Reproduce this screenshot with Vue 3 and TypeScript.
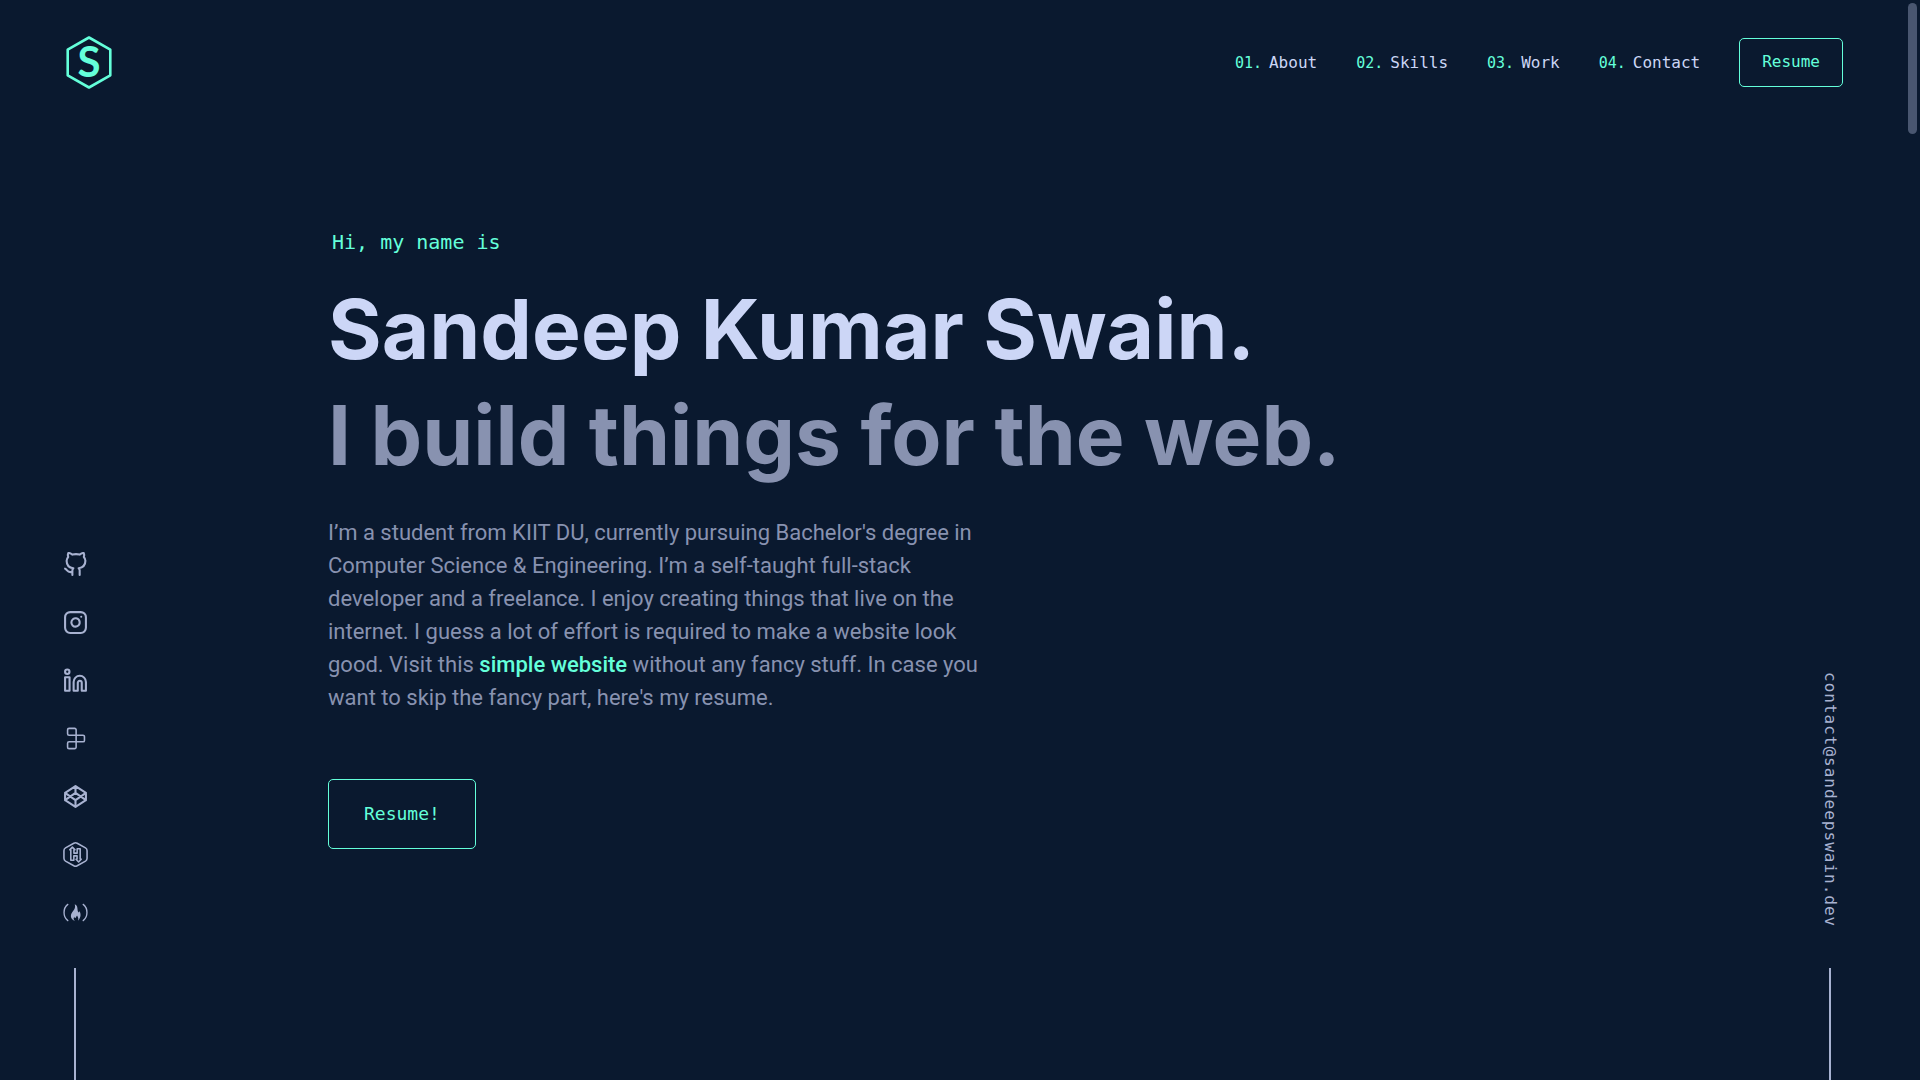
<script setup lang="ts">
interface NavItem {
  number: string
  label: string
  href: string
}

const navItems: NavItem[] = [
  { number: '01.', label: 'About', href: '#about' },
  { number: '02.', label: 'Skills', href: '#skills' },
  { number: '03.', label: 'Work', href: '#work' },
  { number: '04.', label: 'Contact', href: '#contact' },
]
</script>

<template>
  <div class="page">
    <header class="header">
      <a class="logo" href="#top" aria-label="Home">
        <svg width="46" height="53" viewBox="0 0 46 53">
          <polygon points="23,1.5 44.3,13.7 44.3,39.300 23,51.5 1.7,39.300 1.7,13.7" fill="none" stroke="currentColor" stroke-width="2.6" stroke-linejoin="round" />
          <text x="23" y="41" text-anchor="middle" fill="currentColor" class="logo-letter">S</text>
        </svg>
      </a>
      <nav class="nav">
        <ol class="nav-list">
          <li v-for="item in navItems" :key="item.href">
            <a class="nav-link" :href="item.href">
              <span class="nav-number">{{ item.number }}</span>{{ item.label }}
            </a>
          </li>
        </ol>
        <button type="button" class="button button-small">Resume</button>
      </nav>
    </header>

    <div class="body">
      <aside class="rail">
        <ul class="social">
          <li>
            <a href="#github" aria-label="GitHub">
              <svg class="icon" viewBox="0 0 24 24">
                <path d="M9 19c-5 1.5-5-2.5-7-3m14 6v-3.87a3.37 3.37 0 0 0-.94-2.61c3.14-.35 6.44-1.54 6.44-7A5.44 5.44 0 0 0 20 4.77 5.07 5.07 0 0 0 19.91 1S18.73.65 16 2.48a13.38 13.38 0 0 0-7 0C6.27.65 5.09 1 5.09 1A5.07 5.07 0 0 0 5 4.77a5.44 5.44 0 0 0-1.5 3.78c0 5.42 3.3 6.61 6.44 7A3.37 3.37 0 0 0 9 18.13V22" />
              </svg>
            </a>
          </li>
          <li>
            <a href="#instagram" aria-label="Instagram">
              <svg class="icon" viewBox="0 0 24 24">
                <rect x="2" y="2" width="20" height="20" rx="5" />
                <path d="M16 11.37A4 4 0 1 1 12.63 8 4 4 0 0 1 16 11.37zM17.5 6.5h.01" />
              </svg>
            </a>
          </li>
          <li>
            <a href="#linkedin" aria-label="LinkedIn">
              <svg class="icon" viewBox="0 0 24 24">
                <circle cx="4.1" cy="3.6" r="2.1" />
                <rect x="2" y="8.9" width="4.3" height="12.9" />
                <path d="M10.2 21.8V13.4a5.9 5.9 0 0 1 11.8 0v8.4h-4V14.2a1.9 1.9 0 0 0-3.8 0v7.6z" />
              </svg>
            </a>
          </li>
          <li>
            <a href="#replit" aria-label="Replit">
              <svg class="icon medium" viewBox="0 0 24 24">
                <path d="M5.8 2.3h5.4a1.4 1.4 0 0 1 1.4 1.4v5.1H5.8a1.4 1.4 0 0 1-1.4-1.4V3.7a1.4 1.4 0 0 1 1.4-1.4zM12.6 8.8h6.6a1.4 1.4 0 0 1 1.4 1.4v3.6a1.4 1.4 0 0 1-1.4 1.4h-6.6zM5.8 15.2h6.8v5.1a1.4 1.4 0 0 1-1.4 1.4H5.8a1.4 1.4 0 0 1-1.4-1.4v-3.7a1.4 1.4 0 0 1 1.4-1.4z" />
              </svg>
            </a>
          </li>
          <li>
            <a href="#codepen" aria-label="CodePen">
              <svg class="icon" viewBox="0 0 24 24">
                <path d="M12 2l10 6.500v7L12 22 2 15.500v-7zM12 22v-6.500M22 8.500l-10 7-10-7M2 15.500l10-7 10 7M12 2v6.500" />
              </svg>
            </a>
          </li>
          <li>
            <a href="#hackerrank" aria-label="HackerRank">
              <svg class="icon medium" viewBox="0 0 24 24">
                <path d="M10.400 1.200q1.600-.8 3.200 0l8 4.500q1.500.9 1.500 2.600v7.400q0 1.700-1.500 2.600l-8 4.500q-1.600.8-3.200 0l-8-4.500Q.9 17.400.9 15.700V8.300q0-1.700 1.500-2.600z" />
                <path d="M9 4.900L6.500 7.500h1V17.500h2.900v-4.200h3.100V16.500h-1L15 19.200l2.500-2.700h-1V6.500h-2.900v4.200h-3.100V7.500h1z" />
              </svg>
            </a>
          </li>
          <li>
            <a href="#freecodecamp" aria-label="freeCodeCamp">
              <svg class="icon thin" viewBox="0 0 24 24">
                <path d="M4.600 4.200C-.2 8-.2 16 4.600 19.800M19.400 4.200c4.800 3.800 4.800 11.800 0 15.600" />
                <path class="solid" d="M11.300 4c3.600 1.400 2 5.400 3.400 7.600.5.700 1.200.2.700-1.200 2 2.200 2.200 6.600-1 9.400 1-2.600-.4-3.600-.9-5-1.300 1.200-.7 2.400-1.900 2.500-.7 0-.7-.8-.5-1.400-1.300 1.500-1.200 2.800.3 4.200-5.400-2.300-4.200-6.800-1.700-9.600 1.700-2 2.300-3.700 1.600-6.500z" />
              </svg>
            </a>
          </li>
        </ul>
        <span class="rail-line"></span>
      </aside>

      <main class="hero">
        <p class="greeting">Hi, my name is</p>
        <h1 class="name">Sandeep Kumar Swain.</h1>
        <h2 class="name tagline">I build things for the web.</h2>
        <p class="intro">
          I’m a student from KIIT DU, currently pursuing Bachelor's degree in Computer Science &amp;
          Engineering. I’m a self-taught full-stack developer and a freelance. I enjoy creating
          things that live on the internet. I guess a lot of effort is required to make a website
          look good. Visit this <a class="intro-link" href="#simple">simple website</a> without any
          fancy stuff. In case you want to skip the fancy part, here's my resume.
        </p>
        <button type="button" class="button button-large">Resume!</button>
      </main>

      <aside class="rail">
        <a class="email" href="mailto:contact@sandeepswain.dev">contact@sandeepswain.dev</a>
        <span class="rail-line"></span>
      </aside>
    </div>

    <div class="scroll-thumb" aria-hidden="true"></div>
  </div>
</template>

<style>
body {
  background: #0a192f;
}
</style>

<style scoped>
.page {
  --green: #64ffda;
  --slate: #8892b0;
  --light: #a8b2d1;
  --pale: #ccd6f6;
  --mono: "DejaVu Sans Mono", monospace;
  position: relative;
  display: flex;
  flex-direction: column;
  min-height: 100vh;
  background: #0a192f;
  color: var(--slate);
  font-family: Roboto, sans-serif;
}

a {
  color: inherit;
  text-decoration: none;
}

ol,
ul {
  margin: 0;
  padding: 0;
  list-style: none;
}

.header {
  display: flex;
  align-items: center;
  justify-content: space-between;
  height: 125px;
  padding: 0 77px 0 66px;
}

.logo {
  display: flex;
  color: var(--green);
}

.logo-letter {
  font-family: Lato, sans-serif;
  font-size: 42px;
  font-weight: 700;
}

.nav,
.nav-list {
  display: flex;
  align-items: center;
  gap: 39px;
}

.nav-link {
  color: var(--pale);
  font-family: var(--mono);
  font-size: 16px;
}

.nav-number {
  margin-right: 7px;
  color: var(--green);
  font-size: 15px;
}

.button {
  border: 1px solid var(--green);
  border-radius: 5px;
  background: transparent;
  color: var(--green);
  font-family: var(--mono);
  cursor: pointer;
}

.button-small {
  padding: 13px 22px 15px;
  font-size: 16px;
}

.button-large {
  padding: 24px 35px;
  font-size: 18px;
  line-height: 20px;
}

.body {
  display: grid;
  flex: 1;
  grid-template-columns: 150px 1fr 180px;
}

.rail {
  display: flex;
  flex-direction: column;
  align-items: center;
  justify-content: flex-end;
  gap: 41px;
  color: var(--light);
}

.rail-line {
  width: 2px;
  height: 112px;
  background: var(--light);
}

.social {
  display: flex;
  flex-direction: column;
  gap: 33px;
  margin-bottom: 2px;
}

.social a {
  display: block;
}

.icon {
  display: block;
  width: 25px;
  height: 25px;
  fill: none;
  stroke: currentColor;
  stroke-width: 2;
  stroke-linecap: round;
  stroke-linejoin: round;
}

.icon.medium {
  stroke-width: 1.5;
}

.icon.thin {
  stroke-width: 1.3;
}

.icon .solid {
  fill: currentColor;
  stroke: none;
}

.email {
  font-family: var(--mono);
  font-size: 16px;
  letter-spacing: 1px;
  writing-mode: vertical-rl;
}

.hero {
  padding: 103px 40px 40px 178px;
}

.greeting {
  margin: 0 0 21px 4px;
  color: var(--green);
  font-family: var(--mono);
  font-size: 20px;
  line-height: 28px;
}

.name {
  margin: 0;
  color: var(--pale);
  font-family: Inter, sans-serif;
  font-size: 82px;
  font-weight: 700;
  line-height: 106px;
}

.tagline {
  color: var(--slate);
}

.intro {
  max-width: 655px;
  margin: 27px 0 65px;
  font-size: 22px;
  line-height: 33px;
}

.intro-link {
  color: var(--green);
  font-weight: 500;
}

.scroll-thumb {
  position: absolute;
  top: 3px;
  right: 3px;
  width: 9px;
  height: 131px;
  border-radius: 5px;
  background: #495670;
}
</style>
